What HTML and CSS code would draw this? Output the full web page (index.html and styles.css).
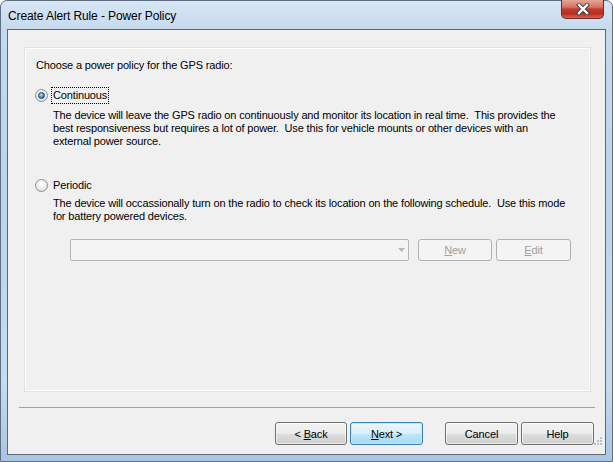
FILE: index.html
```html
<!DOCTYPE html>
<html lang="en">
<head>
    <meta charset="UTF-8">
    <title>Create Alert Rule - Power Policy</title>
    <link rel="stylesheet" href="styles.css">
</head>
<body>
    <div class="window">
        <div class="titlebar">
            <span class="title">Create Alert Rule - Power Policy</span>
            <div class="close">
                <svg width="16" height="12" viewBox="0 0 16 12">
                    <path d="M4 2 L12 10 M12 2 L4 10" stroke="#3d3d4a" stroke-width="4.2" stroke-linecap="square"/>
                    <path d="M4 2 L12 10 M12 2 L4 10" stroke="#ffffff" stroke-width="2.4" stroke-linecap="square"/>
                </svg>
            </div>
        </div>
        <div class="client">
            <div class="panel">
                <p class="prompt">Choose a power policy for the GPS radio:</p>

                <div class="option first">
                    <span class="radio checked"></span>
                    <span class="label focused">Continuous</span>
                </div>
                <p class="desc first-desc">The device will leave the GPS radio on continuously and monitor its location in real time.&nbsp; This provides the<br>best responsiveness but requires a lot of power.&nbsp; Use this for vehicle mounts or other devices with an<br>external power source.</p>

                <div class="option second">
                    <span class="radio"></span>
                    <span class="label">Periodic</span>
                </div>
                <p class="desc second-desc">The device will occassionally turn on the radio to check its location on the following schedule.&nbsp; Use this mode<br>for battery powered devices.</p>

                <div class="schedule">
                    <div class="combo">
                        <svg width="7" height="4" viewBox="0 0 7 4"><path d="M0 0 H7 L3.5 4 Z" fill="#b8b8b8"/></svg>
                    </div>
                    <button class="btn disabled new"><u>N</u>ew</button>
                    <button class="btn disabled edit"><u>E</u>dit</button>
                </div>
            </div>

            <div class="separator"></div>

            <div class="buttons">
                <button class="btn back">&lt; <u>B</u>ack</button>
                <button class="btn default next"><u>N</u>ext &gt;</button>
                <button class="btn cancel">Cancel</button>
                <button class="btn help">Help</button>
            </div>
        </div>
        <div class="grip">
            <svg width="10" height="10" viewBox="0 0 10 10">
                <g fill="#b9c3cc">
                    <rect x="7" y="1" width="2" height="2"/>
                    <rect x="4" y="4" width="2" height="2"/>
                    <rect x="7" y="4" width="2" height="2"/>
                    <rect x="1" y="7" width="2" height="2"/>
                    <rect x="4" y="7" width="2" height="2"/>
                    <rect x="7" y="7" width="2" height="2"/>
                </g>
            </svg>
        </div>
    </div>
</body>
</html>
```

FILE: styles.css
```css
body {
    margin: 0;
    width: 613px;
    height: 462px;
    overflow: hidden;
    background: #ffffff;
    font-family: "Liberation Sans", Arial, sans-serif;
}
.window {
    width: 613px;
    height: 462px;
    box-sizing: border-box;
    border: 1px solid #5f6f82;
    border-radius: 7px 7px 0 0;
    background: linear-gradient(180deg, #d7e6f5 0px, #c5d9ee 30px, #bcd3eb 200px, #c7dbef 380px, #a9c4e2 462px);
    display: flex;
    flex-direction: column;
}
.titlebar {
    height: 28px;
    display: flex;
    align-items: flex-start;
    padding-left: 7px;
}
.title {
    font-size: 12px;
    color: #000;
    margin-top: 8px;
    letter-spacing: -0.1px;
}
.close {
    margin-left: auto;
    margin-right: 8px;
    width: 43px;
    height: 19px;
    box-sizing: border-box;
    margin-top: -1px;
    border: 1px solid #6d2a2a;
    border-top: none;
    border-radius: 0 0 5px 5px;
    background: linear-gradient(180deg, #e8a493 0%, #d47565 40%, #c23d2c 50%, #b73021 75%, #d8604a 100%);
    display: flex;
    align-items: center;
    justify-content: center;
}
.close svg {
    display: block;
}
.client {
    margin: 0 6px;
    height: 426px;
    box-sizing: border-box;
    border: 1px solid #5b6876;
    background: #f0f0f0;
    font-size: 11px;
    letter-spacing: -0.15px;
    color: #000;
    display: flex;
    flex-direction: column;
}
.panel {
    margin: 18px 15px 0 17px;
    height: 343px;
    box-sizing: border-box;
    border: 1px solid #ffffff;
    box-shadow: 0 0 0 1px #dfe3e7;
    padding: 10px 10px 0 10px;
}
.prompt {
    margin: 0;
    line-height: 13px;
}
.option {
    display: flex;
    align-items: center;
    height: 13px;
    margin-left: -1px;
}
.option.first {
    margin-top: 17px;
}
.option.second {
    margin-top: 31px;
}
.radio {
    width: 13px;
    height: 13px;
    box-sizing: border-box;
    border-radius: 50%;
    border: 1px solid #8e8f8f;
    background: radial-gradient(circle at 50% 40%, #ffffff 20%, #e2e2e2 70%, #cdcdcd 100%);
    display: flex;
    align-items: center;
    justify-content: center;
}
.radio.checked::after {
    content: "";
    width: 7px;
    height: 7px;
    box-sizing: border-box;
    border-radius: 50%;
    border: 1px solid #1b3f6a;
    background: radial-gradient(circle at 40% 35%, #b9e3fb 0%, #3f8fd2 55%, #1f5aa0 100%);
}
.label {
    margin-left: 4px;
    padding: 1px 1px;
    line-height: 13px;
}
.label.focused {
    outline: 1px dotted #000;
}
.desc {
    margin: 0 0 0 17px;
    line-height: 13px;
    white-space: nowrap;
}
.first-desc {
    margin-top: 7px;
}
.second-desc {
    margin-top: 5px;
}
.schedule {
    display: flex;
    align-items: center;
    margin-top: 16px;
    margin-left: 34px;
    height: 22px;
}
.combo {
    width: 339px;
    height: 22px;
    box-sizing: border-box;
    border: 1px solid #b4b4b4;
    border-radius: 2px;
    background: #f4f4f4;
    display: flex;
    align-items: center;
    justify-content: flex-end;
    padding-right: 3px;
}
.combo svg {
    display: block;
}
.btn {
    font-family: "Liberation Sans", Arial, sans-serif;
    font-size: 11px;
    letter-spacing: -0.15px;
    color: #000;
    height: 23px;
    width: 73px;
    box-sizing: border-box;
    padding: 0;
    border: 1px solid #707070;
    border-radius: 3px;
    background: linear-gradient(180deg, #f2f2f2 0%, #ebebeb 50%, #dddddd 51%, #cfcfcf 100%);
    box-shadow: inset 0 0 0 1px rgba(255, 255, 255, 0.6);
}
.btn u {
    text-decoration-thickness: 1px;
}
.btn.disabled {
    height: 22px;
    color: #a0a0a0;
    border-color: #adb2b5;
    background: #f4f4f4;
    box-shadow: none;
}
.btn.new {
    width: 74px;
    margin-left: 9px;
}
.btn.edit {
    width: 75px;
    margin-left: 4px;
}
.btn.default {
    border-color: #3c7fb1;
    background: linear-gradient(180deg, #eaf6fd 0%, #d9f0fc 50%, #bee6fd 51%, #a7d9f5 100%);
    box-shadow: inset 0 0 0 1px #c3e6fb;
}
.separator {
    margin: 16px 10px 0 11px;
    height: 1px;
    background: #a0a0a0;
}
.buttons {
    display: flex;
    justify-content: flex-end;
    margin: 14px 11px 0 0;
}
.btn.back {
    width: 72px;
}
.btn.next {
    margin-left: 3px;
}
.btn.cancel {
    margin-left: 22px;
}
.btn.help {
    margin-left: 3px;
}
.grip {
    display: flex;
    justify-content: flex-end;
    margin: -19px 9px 0 0;
}
.grip svg {
    display: block;
}
```
